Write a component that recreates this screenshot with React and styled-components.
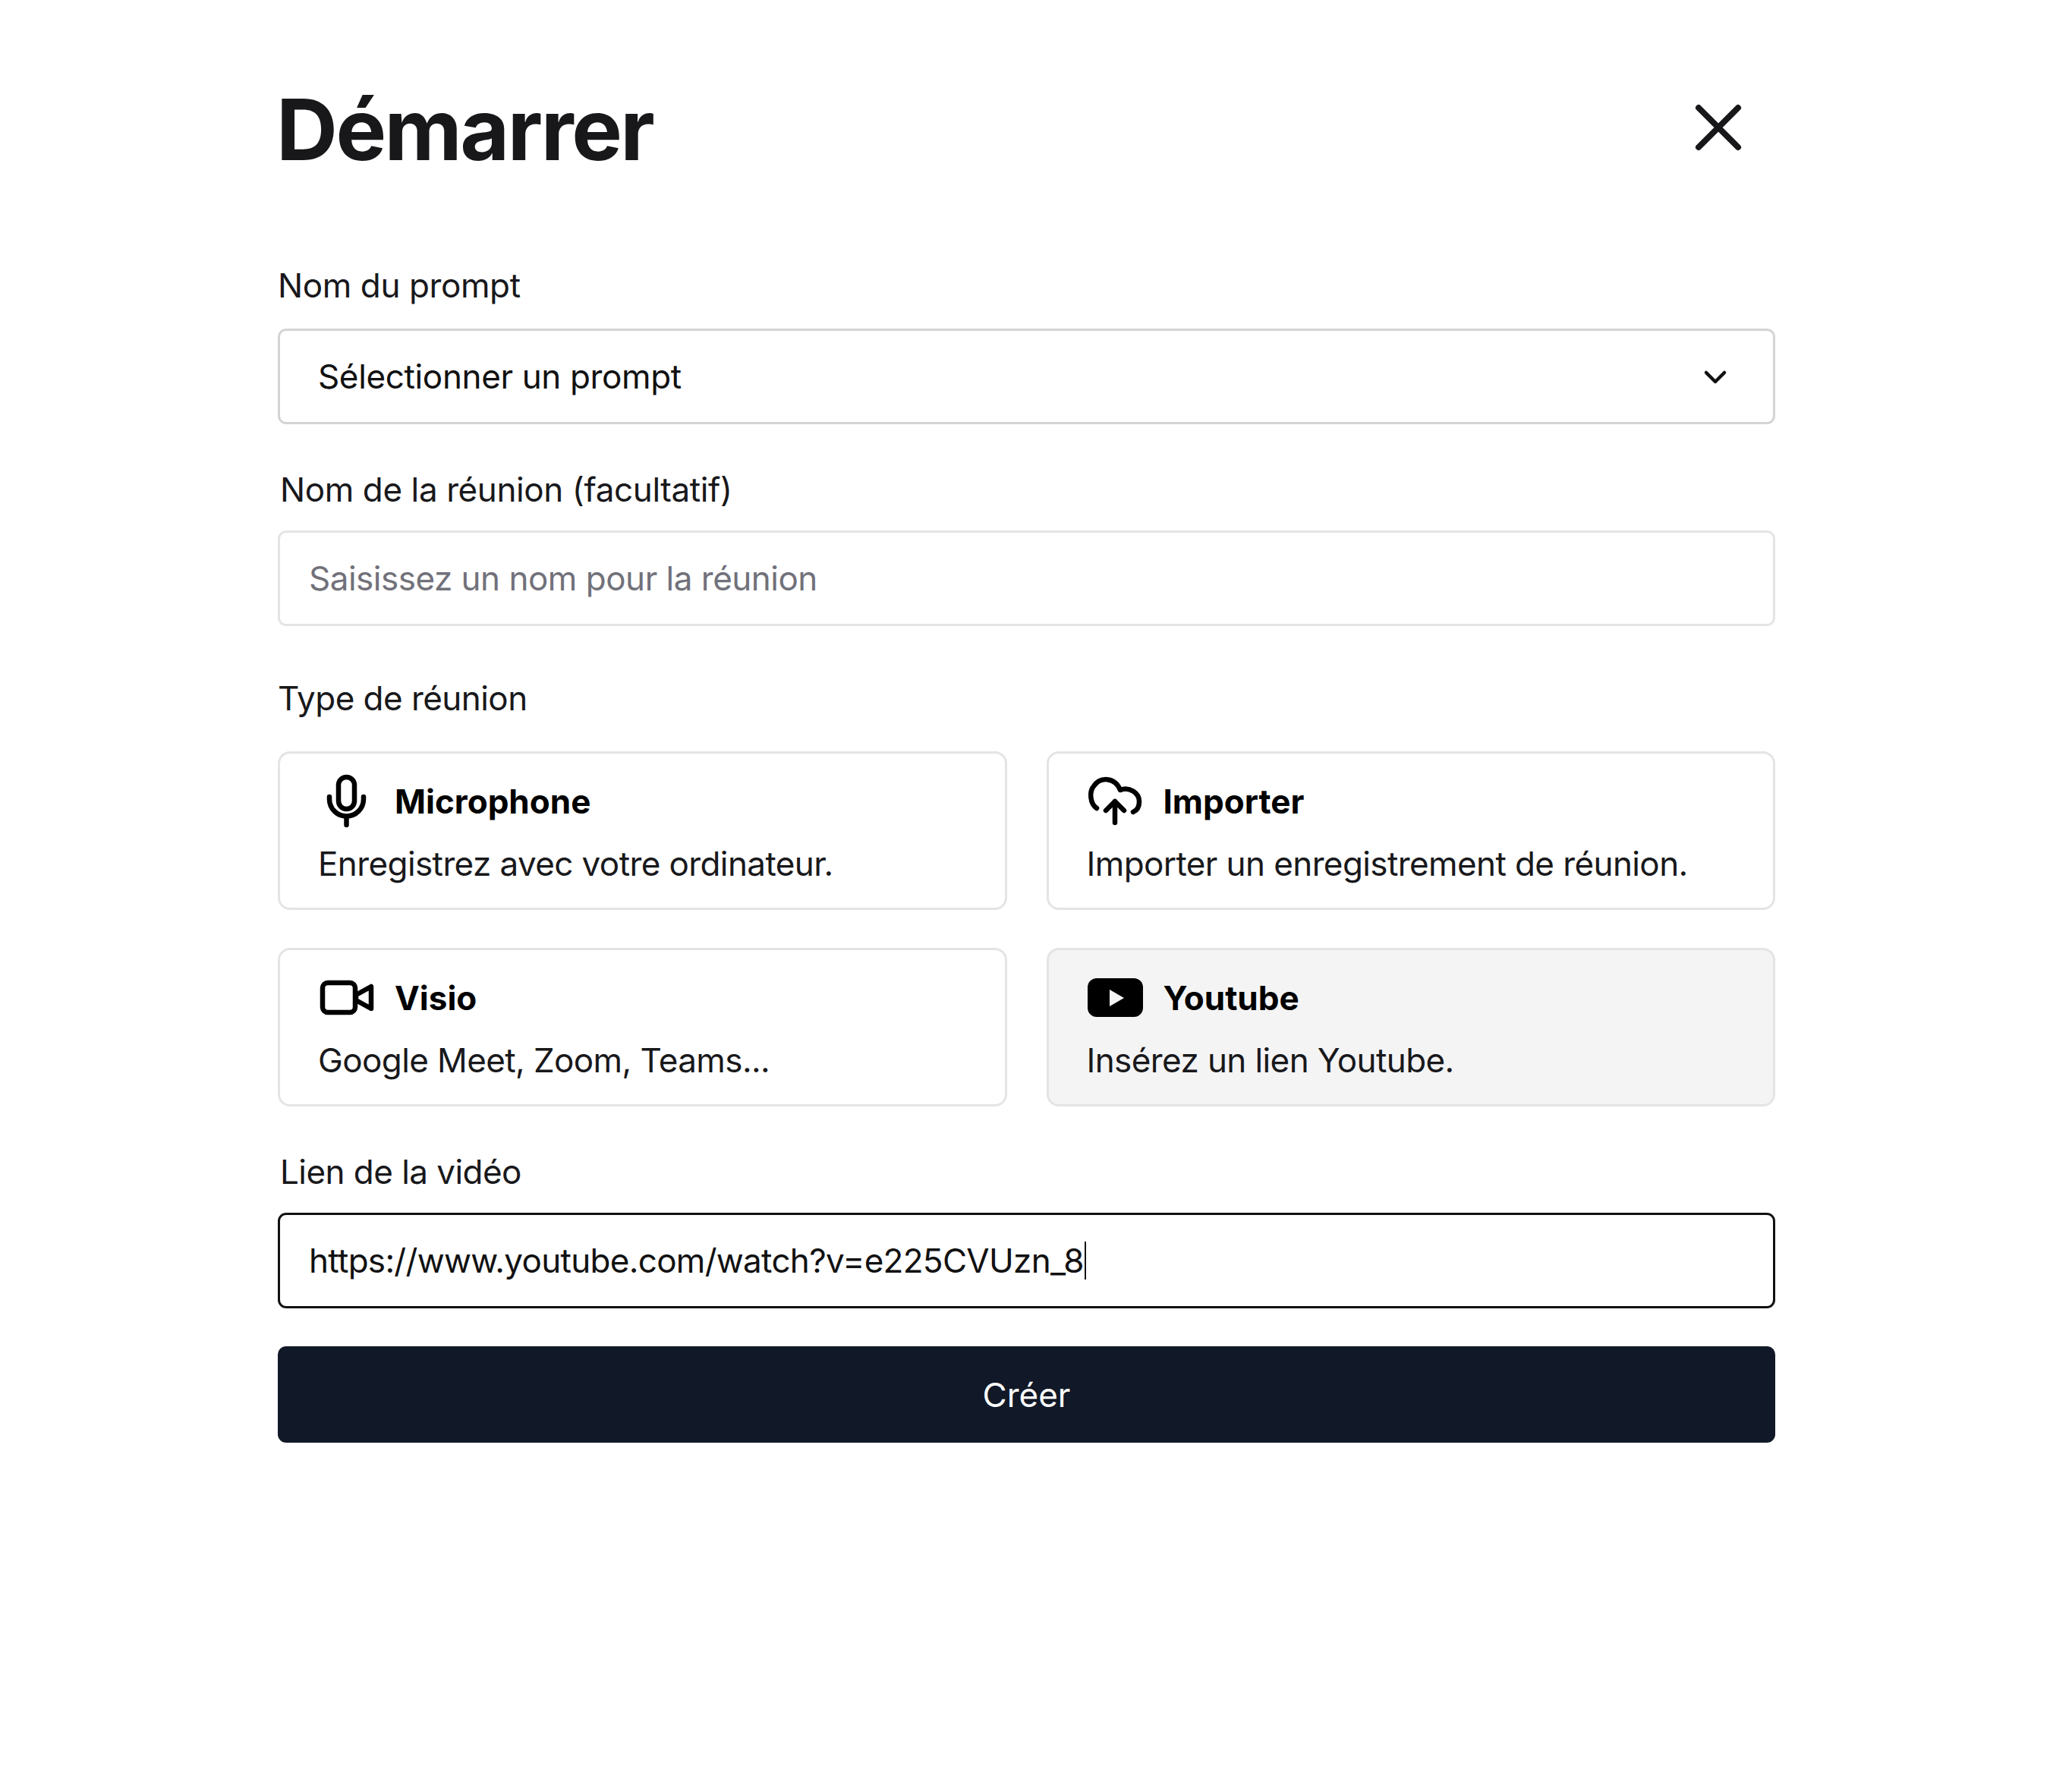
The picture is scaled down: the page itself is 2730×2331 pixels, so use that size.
import styled, { createGlobalStyle } from "styled-components"

const GlobalStyle = createGlobalStyle`
    * {
        box-sizing: border-box;
    }
    html, body {
        margin: 0;
        background: #FFFFFF;
    }
    body {
        font-family: Inter, "Liberation Sans", sans-serif;
        color: #111111;
    }
`

function CloseIcon() {
    return (
        <svg width="68" height="68" viewBox="0 0 68 68" fill="none" stroke="#18181B" strokeWidth="8" strokeLinecap="round">
            <path d="M10 8 L62 60 M62 8 L10 60" />
        </svg>
    )
}

function ChevronIcon() {
    return (
        <svg width="36" height="24" viewBox="0 0 36 24" fill="none" stroke="#111111" strokeWidth="4.5" strokeLinecap="round" strokeLinejoin="round">
            <path d="M6 7 L18 19 L30 7" />
        </svg>
    )
}

function MicIcon() {
    return (
        <svg width="76" height="74" viewBox="0 0 76 74" fill="none" stroke="#000000" strokeWidth="6.5" strokeLinecap="round">
            <rect x="27" y="5" width="21" height="42" rx="10.5" />
            <path d="M15 31 V34 A22.5 22.5 0 0 0 60 34 V31 M37.5 57 V68" />
        </svg>
    )
}

function UploadIcon() {
    return (
        <svg width="76" height="74" viewBox="0 0 76 74" fill="none" stroke="#000000" strokeWidth="6.5" strokeLinecap="round" strokeLinejoin="round">
            <path d="M13 46 C4 40 3 24 9 17 C18 4 37 5 44 22 C56 17 69 26 69 37 C69 44 66 49 61 51" />
            <path d="M37 37 V65 M25 49 L37 37 L49 49" />
        </svg>
    )
}

function VideoIcon() {
    return (
        <svg width="76" height="74" viewBox="0 0 76 74" fill="none" stroke="#000000" strokeWidth="6.5" strokeLinecap="round" strokeLinejoin="round">
            <rect x="6" y="17" width="43" height="39" rx="7" />
            <path d="M50 33 L70 22 V51 L50 40 Z" />
        </svg>
    )
}

function YoutubeIcon() {
    return (
        <svg width="76" height="74" viewBox="0 0 76 74">
            <rect x="1" y="11" width="73" height="51" rx="12" fill="#000000" />
            <path d="M30 26 L49 37 L30 48 Z" fill="#F4F4F5" />
        </svg>
    )
}

const meetingTypes = [
    { title: "Microphone", text: "Enregistrez avec votre ordinateur.", icon: <MicIcon /> },
    { title: "Importer", text: "Importer un enregistrement de réunion.", icon: <UploadIcon /> },
    { title: "Visio", text: "Google Meet, Zoom, Teams...", icon: <VideoIcon /> },
    { title: "Youtube", text: "Insérez un lien Youtube.", icon: <YoutubeIcon />, selected: true },
]

export default function App() {
    return (
        <>
            <GlobalStyle />
            <Page>
                <Header>
                    <Title>Démarrer</Title>
                    <CloseButton>
                        <CloseIcon />
                    </CloseButton>
                </Header>

                <Label $top={108}>Nom du prompt</Label>
                <Select>
                    <span>Sélectionner un prompt</span>
                    <ChevronIcon />
                </Select>

                <Label $top={58} $shift={3}>Nom de la réunion (facultatif)</Label>
                <Input $muted>Saisissez un nom pour la réunion</Input>

                <Label $top={67} $tight>Type de réunion</Label>
                <CardGrid>
                    {meetingTypes.map((type) => (
                        <Card key={type.title} $selected={type.selected}>
                            <CardHead>
                                {type.icon}
                                <CardTitle>{type.title}</CardTitle>
                            </CardHead>
                            <CardText>{type.text}</CardText>
                        </Card>
                    ))}
                </CardGrid>

                <Label $top={58} $shift={3} $tight>Lien de la vidéo</Label>
                <Input $focused>
                    https://www.youtube.com/watch?v=e225CVUzn_8
                    <Caret />
                </Input>

                <SubmitButton>Créer</SubmitButton>
            </Page>
        </>
    )
}

const Page = styled.div`
    display: flex;
    flex-direction: column;
    width: 1973px;
    height: 2331px;
    margin-left: 366px;
    padding-top: 100px;
`
const Header = styled.div`
    display: flex;
    justify-content: space-between;
    align-items: center;
    height: 140px;
    padding-right: 43px;
`
const Title = styled.h1`
    margin: 0 0 0 -2px;
    font-size: 112px;
    font-weight: 700;
    letter-spacing: -2.5px;
    color: #18181B;
`
const CloseButton = styled.div`
    display: flex;
    margin-bottom: 5px;
`
const Label = styled.label`
    height: 56px;
    margin-top: ${(props) => props.$top}px;
    margin-left: ${(props) => props.$shift || 0}px;
    font-size: 44px;
    line-height: 56px;
    letter-spacing: ${(props) => (props.$tight ? "-0.55px" : "-0.4px")};
    color: #18181B;
`
const Select = styled.div`
    display: flex;
    justify-content: space-between;
    align-items: center;
    height: 126px;
    margin-top: 29px;
    padding: 0 58px 0 50px;
    border: 3px solid #D4D4D4;
    border-radius: 11px;
    font-size: 44px;
    letter-spacing: -0.36px;
`
const Input = styled.div`
    display: flex;
    align-items: center;
    height: 126px;
    margin-top: 26px;
    padding: 0 38px;
    border: 3px solid ${(props) => (props.$focused ? "#111111" : "#E4E4E7")};
    border-radius: 11px;
    font-size: 44px;
    letter-spacing: ${(props) => (props.$focused ? "-0.7px" : "-0.5px")};
    color: ${(props) => (props.$muted ? "#71717A" : "#111111")};
`
const Caret = styled.span`
    width: 2px;
    height: 50px;
    margin-left: 1px;
    background: #111111;
`
const CardGrid = styled.div`
    display: grid;
    grid-template-columns: 1fr 1fr;
    gap: 50px 52px;
    margin-top: 42px;
`
const Card = styled.div`
    display: flex;
    flex-direction: column;
    height: 209px;
    padding: 26px 0 0 50px;
    background: ${(props) => (props.$selected ? "#F4F4F5" : "#FFFFFF")};
    border: 3px solid #E4E4E7;
    border-radius: 16px;
`
const CardHead = styled.div`
    display: flex;
    align-items: center;
    gap: 25px;
`
const CardTitle = styled.span`
    font-size: 44px;
    font-weight: 700;
    color: #000000;
`
const CardText = styled.p`
    margin: 17px 0 0;
    font-size: 44px;
    line-height: 56px;
    letter-spacing: -0.6px;
    color: #18181B;
`
const SubmitButton = styled.button`
    height: 127px;
    margin-top: 50px;
    border: none;
    border-radius: 11px;
    background: #111827;
    font-family: inherit;
    font-size: 44px;
    color: #FFFFFF;
`
